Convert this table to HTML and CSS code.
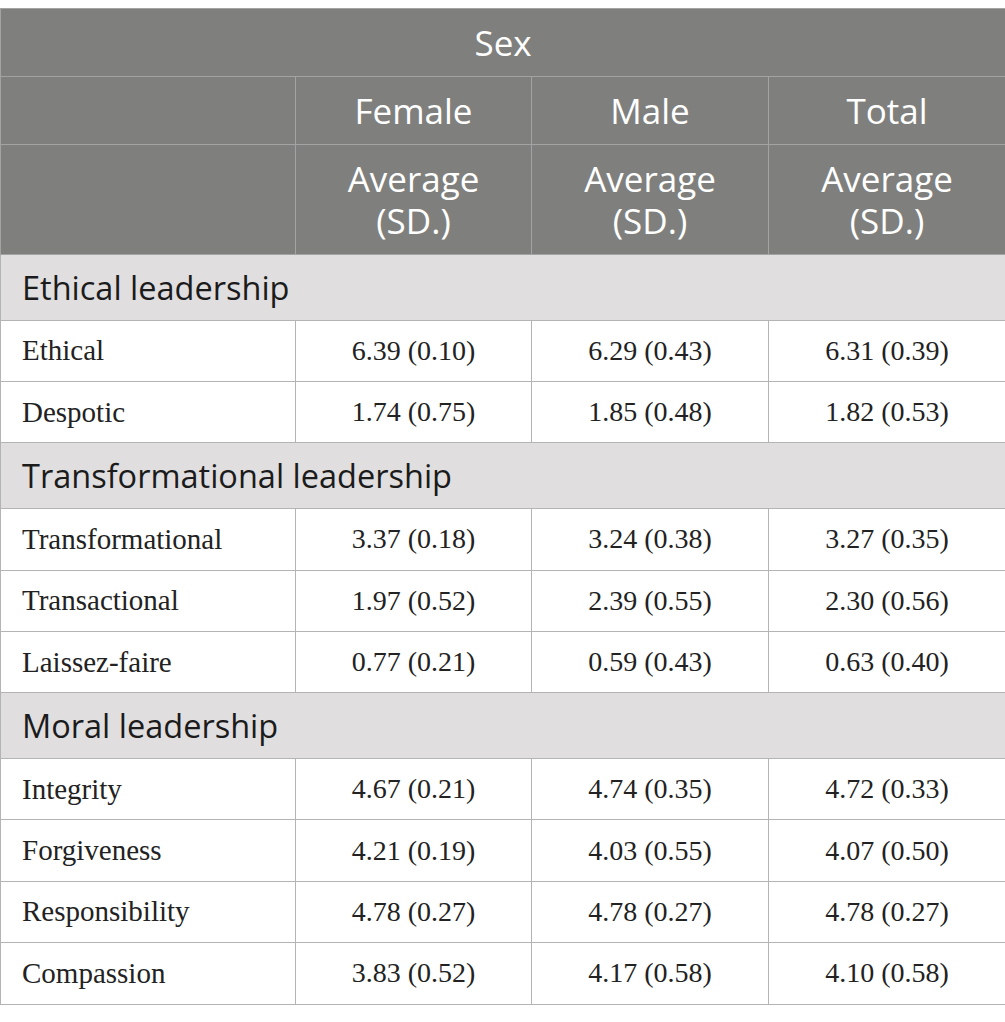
FILE: index.html
```html
<!DOCTYPE html>
<html>
<head>
<meta charset="utf-8">
<link rel="stylesheet" href="styles.css">
</head>
<body>
<table class="tbl">
  <colgroup>
    <col class="c1"><col class="c2"><col class="c3"><col class="c4">
  </colgroup>
  <thead>
    <tr class="h1"><th colspan="4">Sex</th></tr>
    <tr class="h2"><th></th><th>Female</th><th>Male</th><th>Total</th></tr>
    <tr class="h3"><th></th><th><span class="ln">Average</span><span class="ln">(SD.)</span></th><th><span class="ln">Average</span><span class="ln">(SD.)</span></th><th><span class="ln">Average</span><span class="ln">(SD.)</span></th></tr>
  </thead>
  <tbody>
    <tr class="sec"><td colspan="4">Ethical leadership</td></tr>
    <tr class="row"><td>Ethical</td><td>6.39 (0.10)</td><td>6.29 (0.43)</td><td>6.31 (0.39)</td></tr>
    <tr class="row"><td>Despotic</td><td>1.74 (0.75)</td><td>1.85 (0.48)</td><td>1.82 (0.53)</td></tr>
    <tr class="sec"><td colspan="4">Transformational leadership</td></tr>
    <tr class="row"><td>Transformational</td><td>3.37 (0.18)</td><td>3.24 (0.38)</td><td>3.27 (0.35)</td></tr>
    <tr class="row"><td>Transactional</td><td>1.97 (0.52)</td><td>2.39 (0.55)</td><td>2.30 (0.56)</td></tr>
    <tr class="row"><td>Laissez-faire</td><td>0.77 (0.21)</td><td>0.59 (0.43)</td><td>0.63 (0.40)</td></tr>
    <tr class="sec"><td colspan="4">Moral leadership</td></tr>
    <tr class="row"><td>Integrity</td><td>4.67 (0.21)</td><td>4.74 (0.35)</td><td>4.72 (0.33)</td></tr>
    <tr class="row"><td>Forgiveness</td><td>4.21 (0.19)</td><td>4.03 (0.55)</td><td>4.07 (0.50)</td></tr>
    <tr class="row"><td>Responsibility</td><td>4.78 (0.27)</td><td>4.78 (0.27)</td><td>4.78 (0.27)</td></tr>
    <tr class="row"><td>Compassion</td><td>3.83 (0.52)</td><td>4.17 (0.58)</td><td>4.10 (0.58)</td></tr>
  </tbody>
</table>
</body>
</html>
```
FILE: styles.css
```css
html, body {
  margin: 0;
  padding: 0;
  background: #ffffff;
}
body {
  padding-top: 8px;
}
.tbl {
  width: 1005px;
  table-layout: fixed;
  border-collapse: collapse;
}
.c1 { width: 295px; }
.c2 { width: 236px; }
.c3 { width: 237px; }
.c4 { width: 237px; }

.tbl th {
  background: #7f807e;
  color: #ffffff;
  font-family: "Open Sans", sans-serif;
  font-weight: 400;
  font-size: 35px;
  border: 1px solid #a3a3a3;
  padding: 0;
  text-align: center;
  vertical-align: middle;
}
.h1 th { height: 67px; }
.h2 th { height: 67px; }
.h3 th { height: 109px; line-height: 42px; }
.ln { display: block; }

.tbl td {
  border: 1px solid #b4b4b4;
  padding: 0;
  vertical-align: middle;
}
.sec td {
  background: #e0dedf;
  font-family: "Open Sans", sans-serif;
  font-size: 32.5px;
  color: #1b1b1b;
  height: 64.7px;
  padding-left: 21px;
}
.row td {
  font-family: "Liberation Serif", serif;
  font-size: 28px;
  color: #222222;
  height: 60.4px;
  text-align: center;
}
.row td:first-child {
  text-align: left;
  padding-left: 21px;
  font-size: 29px;
}
```
